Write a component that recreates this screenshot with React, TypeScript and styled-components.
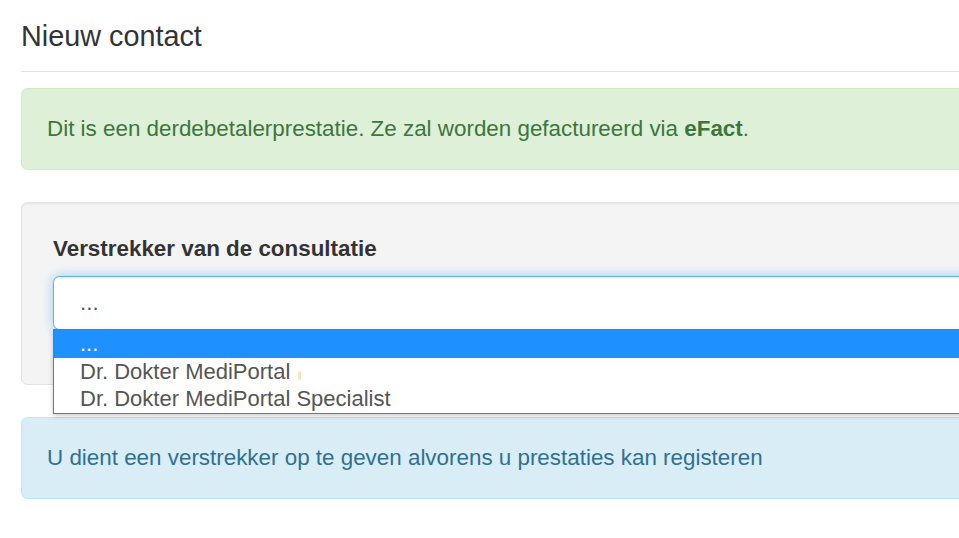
import React from "react";
import styled, { createGlobalStyle } from "styled-components";

const Global = createGlobalStyle`
  html, body { margin: 0; padding: 0; background: #fff; overflow: hidden; }
  body { font-family: "Liberation Sans", Arial, Helvetica, sans-serif; font-size: 22.4px; line-height: 1.42857; color: #333; }
  * { box-sizing: border-box; }
`;

const Page = styled.div`
  width: 1240px;
  padding: 20px 0 0 21px;
`;

const Title = styled.h4`
  margin: 0;
  font-size: 28.8px;
  font-weight: 400;
  line-height: 32px;
  color: #333;
`;

const Rule = styled.hr`
  margin: 19px 0 16px;
  border: 0;
  border-top: 1.5px solid #e2e2e2;
`;

const Alert = styled.div<{ $tone: "success" | "info" }>`
  padding: 24px 25px;
  margin-bottom: 32px;
  border: 1px solid ${(p) => (p.$tone === "success" ? "#d6e9c6" : "#bce8f1")};
  border-radius: 6.4px;
  background: ${(p) => (p.$tone === "success" ? "#dff0d8" : "#d9edf7")};
  color: ${(p) => (p.$tone === "success" ? "#3c763d" : "#31708f")};
  line-height: 32px;
`;

const Well = styled.div`
  min-height: 32px;
  padding: 30px 31px;
  margin-bottom: 32px;
  background: #f4f4f4;
  border: 1px solid #e3e3e3;
  border-radius: 6.4px;
  box-shadow: inset 0 1.6px 1.6px rgba(0, 0, 0, 0.05);
`;

const FormGroup = styled.div`
  margin-bottom: 24px;
`;

const Label = styled.label`
  display: block;
  margin-bottom: 11px;
  font-weight: 700;
  line-height: 32px;
  color: #333;
`;

const SelectWrap = styled.div`
  position: relative;
`;

const SelectBox = styled.div`
  height: 54px;
  padding: 0 26px;
  display: flex;
  align-items: center;
  background: #fff;
  color: #555;
  border: 1px solid #66afe9;
  border-radius: 6.4px;
  box-shadow: inset 0 1.6px 1.6px rgba(0, 0, 0, 0.075), 0 0 12px rgba(102, 175, 233, 0.6);
`;

const ListBox = styled.div`
  position: absolute;
  top: 53px;
  left: 0;
  right: 0;
  z-index: 5;
  background: #fff;
  border: 1px solid #767676;
  box-shadow: 0 2px 5px rgba(0, 0, 0, 0.2);
`;

const Option = styled.div<{ $active?: boolean }>`
  height: 27.7px;
  line-height: 27.7px;
  padding: 0 26px;
  font-size: 22px;
  white-space: nowrap;
  background: ${(p) => (p.$active ? "#1e90ff" : "#fff")};
  color: ${(p) => (p.$active ? "#fff" : "#555")};
`;

const Speck = styled.span`
  display: inline-block;
  width: 3px;
  height: 9px;
  margin-left: 8px;
  vertical-align: -1px;
  background: #fde2bd;
  border-radius: 1.5px;
`;

export default function App() {
  return (
    <>
      <Global />
      <Page>
        <Title>Nieuw contact</Title>
        <Rule />
        <Alert $tone="success">
          Dit is een derdebetalerprestatie. Ze zal worden gefactureerd via <b>eFact</b>.
        </Alert>
        <Well>
          <FormGroup>
            <Label>Verstrekker van de consultatie</Label>
            <SelectWrap>
              <SelectBox>...</SelectBox>
              <ListBox>
                <Option $active>...</Option>
                <Option>
                  Dr. Dokter MediPortal<Speck />
                </Option>
                <Option>Dr. Dokter MediPortal Specialist</Option>
              </ListBox>
            </SelectWrap>
          </FormGroup>
        </Well>
        <Alert $tone="info">
          U dient een verstrekker op te geven alvorens u prestaties kan registeren
        </Alert>
      </Page>
    </>
  );
}
